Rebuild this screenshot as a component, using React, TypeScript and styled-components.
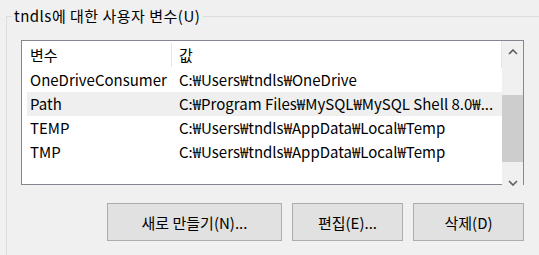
import React from 'react'
import styled, { createGlobalStyle } from 'styled-components'

const GlobalStyle = createGlobalStyle`
  html, body {
    margin: 0;
    padding: 0;
    background: #f0f0f0;
    overflow: hidden;
  }
  body {
    font-family: "Noto Sans CJK KR", "Noto Sans", sans-serif;
    font-size: 15px;
    color: #000;
  }
`

type Variable = {
  name: string
  value: string
  selected?: boolean
}

const variables: Variable[] = [
  { name: 'OneDriveConsumer', value: 'C:₩Users₩tndls₩OneDrive' },
  { name: 'Path', value: 'C:₩Program Files₩MySQL₩MySQL Shell 8.0₩...', selected: true },
  { name: 'TEMP', value: 'C:₩Users₩tndls₩AppData₩Local₩Temp' },
  { name: 'TMP', value: 'C:₩Users₩tndls₩AppData₩Local₩Temp' },
]

const Page = styled.div`
  box-sizing: border-box;
  width: 539px;
  height: 255px;
  padding: 6px 0 0 6px;
  overflow: hidden;
`

const Group = styled.fieldset`
  margin: 0;
  padding: 0;
  min-width: 0;
  height: 260px;
  border: none;
  border-top: 1px solid #dcdcdc;
  border-left: 1px solid #dcdcdc;
`

const Legend = styled.legend`
  margin-left: 5px;
  padding: 0 3px 0 2px;
  line-height: 20px;
  letter-spacing: 0.5px;
`

const ListBox = styled.div`
  box-sizing: border-box;
  display: grid;
  grid-template-columns: 1fr 21px;
  width: 503px;
  height: 145px;
  margin: 14px 0 0 14px;
  border: 1px solid #828790;
  background: #fff;
`

const Table = styled.div`
  display: flex;
  flex-direction: column;
  min-width: 0;
`

const HeaderRow = styled.div`
  display: grid;
  grid-template-columns: 150px 1fr;
  height: 27px;
  align-items: center;
  border-right: 1px solid #e5e5e5;
`

const HeaderCell = styled.div<{ divider?: boolean }>`
  box-sizing: border-box;
  height: 24px;
  line-height: 24px;
  padding-left: ${p => p.divider ? '8px' : '7px'};
  border-right: ${p => p.divider ? '1px solid #e5e5e5' : 'none'};
`

const Row = styled.div<{ selected?: boolean }>`
  display: grid;
  grid-template-columns: 145px 1fr;
  height: 24px;
  line-height: 24px;
  margin-left: 5px;
  background: ${p => p.selected ? '#efefef' : 'transparent'};
  white-space: nowrap;
`

const Cell = styled.div<{ first?: boolean }>`
  padding-left: ${p => p.first ? '3px' : '7px'};
  overflow: hidden;
`

const ScrollBar = styled.div`
  display: flex;
  flex-direction: column;
  background: #f0f0f0;
`

const Arrow = styled.div`
  display: flex;
  align-items: center;
  justify-content: center;
  height: 22px;
  flex: none;
`

const Track = styled.div`
  flex: 1;
  display: flex;
  flex-direction: column;
  padding-top: 32px;
  padding-bottom: 10px;
`

const Thumb = styled.div`
  height: 67px;
  background: #cdcdcd;
`

const Buttons = styled.div`
  display: flex;
  justify-content: flex-end;
  gap: 10px;
  width: 503px;
  margin: 18px 0 0 14px;
`

const Button = styled.button<{ wide?: boolean }>`
  box-sizing: border-box;
  width: ${p => p.wide ? '175px' : '111px'};
  height: 38px;
  border: 1px solid #adadad;
  background: #e1e1e1;
  font: inherit;
  color: #000;
  padding: 0;
`

const Chevron: React.FC<{ down?: boolean }> = ({ down }) => (
  <svg width="10" height="6" viewBox="0 0 10 6">
    <path
      d={down ? 'M1 1 L5 5 L9 1' : 'M1 5 L5 1 L9 5'}
      fill="none"
      stroke="#606060"
      strokeWidth="1.6"
    />
  </svg>
)

const App: React.FC = () => {
  return (
    <Page>
      <GlobalStyle />
      <Group>
        <Legend>tndls에 대한 사용자 변수(U)</Legend>
        <ListBox>
          <Table>
            <HeaderRow>
              <HeaderCell divider>변수</HeaderCell>
              <HeaderCell>값</HeaderCell>
            </HeaderRow>
            { variables.map((v, i) => (
              <Row key={i} selected={v.selected}>
                <Cell first>{ v.name }</Cell>
                <Cell>{ v.value }</Cell>
              </Row>
            ))}
          </Table>
          <ScrollBar>
            <Arrow><Chevron /></Arrow>
            <Track>
              <Thumb />
            </Track>
            <Arrow><Chevron down /></Arrow>
          </ScrollBar>
        </ListBox>
        <Buttons>
          <Button wide>새로 만들기(N)...</Button>
          <Button>편집(E)...</Button>
          <Button>삭제(D)</Button>
        </Buttons>
      </Group>
    </Page>
  )
}

export default App
